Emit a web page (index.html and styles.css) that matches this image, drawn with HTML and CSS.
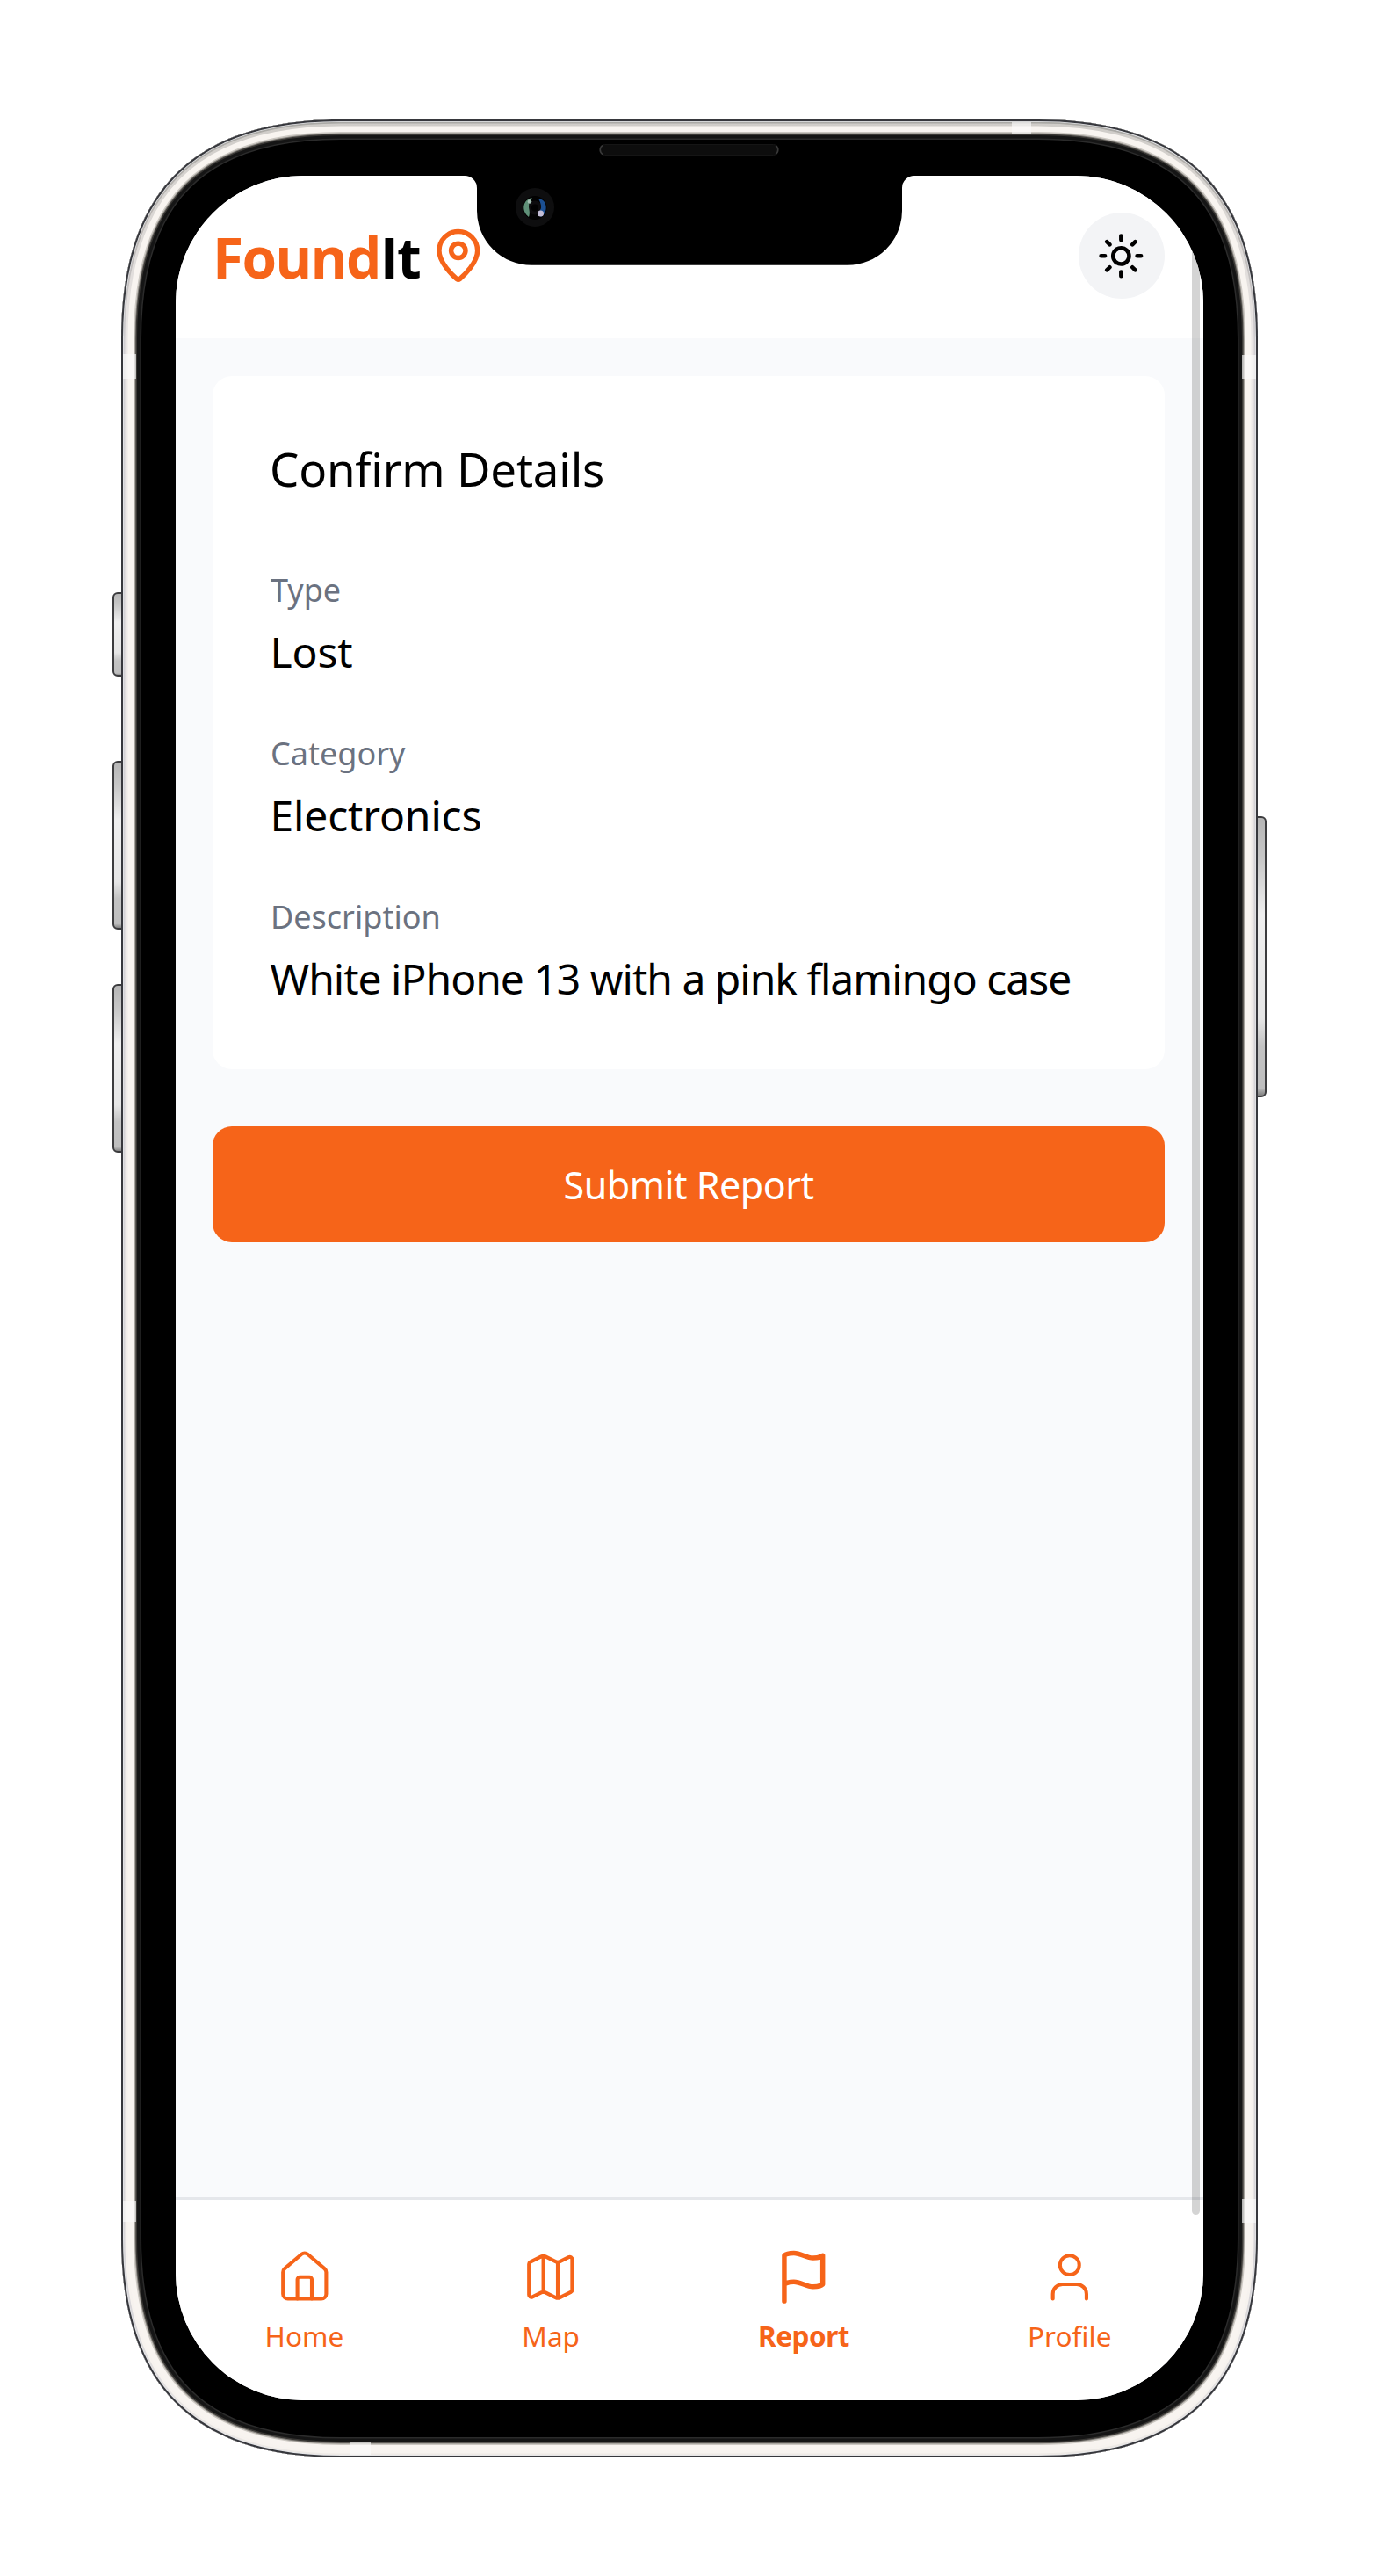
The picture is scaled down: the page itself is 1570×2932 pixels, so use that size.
FILE: index.html
```html
<!DOCTYPE html>
<html lang="en">
<head>
<meta charset="utf-8">
<title>FoundIt</title>
<link rel="stylesheet" href="styles.css">
</head>
<body>
<div class="phone">
  <svg class="frame" viewBox="0 0 1570 2932" aria-hidden="true">
    <defs>
      <path id="shell" d="M138 386C138 218 220 136 388 136H1182C1350 136 1432 218 1432 386V2547C1432 2715 1350 2797 1182 2797H388C220 2797 138 2715 138 2547Z"/>
      <clipPath id="inside"><use href="#shell"/></clipPath>
      <linearGradient id="button" x2="0" y2="1">
        <stop offset="0" stop-color="#b5b5b5"/><stop offset=".15" stop-color="#c8c8c8"/><stop offset=".35" stop-color="#efefef"/><stop offset=".72" stop-color="#e6e6e6"/><stop offset=".82" stop-color="#c3c3c3"/><stop offset=".97" stop-color="#bebebe"/><stop offset="1" stop-color="#777"/>
      </linearGradient>
      <linearGradient id="edge" gradientUnits="userSpaceOnUse" x1="0" y1="136" x2="0" y2="2797">
        <stop offset="0" stop-color="#aaa9a5"/><stop offset=".05" stop-color="#bcb8b5"/><stop offset=".1" stop-color="#d3d1d5"/><stop offset=".94" stop-color="#d9d7da"/><stop offset="1" stop-color="#eeeae6"/>
      </linearGradient>
      <linearGradient id="edge2" gradientUnits="userSpaceOnUse" x1="0" y1="136" x2="0" y2="2797">
        <stop offset="0" stop-color="#cfccc8"/><stop offset=".1" stop-color="#ebe7e6"/><stop offset="1" stop-color="#f7f3ef"/>
      </linearGradient>
    </defs>
    <g fill="url(#button)" stroke="#3c3c3e" stroke-width="2">
      <rect x="129" y="675" width="20" height="94" rx="5"/>
      <rect x="129" y="867" width="20" height="190" rx="5"/>
      <rect x="129" y="1121" width="20" height="190" rx="5"/>
      <rect x="1421" y="930" width="20" height="318" rx="5"/>
    </g>
    <g clip-path="url(#inside)" fill="none">
      <use href="#shell" fill="#000"/>
      <use href="#shell" stroke="#2b2b2b" stroke-width="46"/>
      <use href="#shell" stroke="#151515" stroke-width="43"/>
      <use href="#shell" stroke="#3a3835" stroke-width="36"/>
      <use href="#shell" stroke="#85827d" stroke-width="33"/>
      <use href="#shell" stroke="#cbc7c1" stroke-width="31"/>
      <use href="#shell" stroke="#f8f4f0" stroke-width="28"/>
      <use href="#shell" stroke="url(#edge2)" stroke-width="15"/>
      <use href="#shell" stroke="url(#edge)" stroke-width="9"/>
      <use href="#shell" stroke="#e4e5e8" stroke-width="5.5"/>
      <use href="#shell" stroke="#37383d" stroke-width="4"/>
    </g>
    <g fill="#fafafa" fill-opacity=".65">
      <rect x="140" y="403" width="15" height="28"/><rect x="1414" y="404" width="16" height="27"/>
      <rect x="1152" y="139" width="22" height="14"/><rect x="398" y="2779" width="24" height="15"/>
      <rect x="140" y="2505" width="15" height="24"/><rect x="1414" y="2503" width="16" height="27"/>
    </g>
  </svg>
  <main class="screen">
    <header class="topbar">
      <div class="logo"><span class="found">Found</span><span class="it">It</span>
        <svg class="pin" viewBox="0 0 24 24"><path d="M20 10c0 4.993-5.539 10.193-7.399 11.799a1 1 0 0 1-1.202 0C9.539 20.193 4 14.993 4 10a8 8 0 0 1 16 0"/><circle cx="12" cy="10" r="3"/></svg>
      </div>
      <button class="theme" aria-label="Theme"><svg viewBox="0 0 24 24"><circle cx="12" cy="12" r="4"/><path d="M12 2v2M12 20v2M4.93 4.93l1.41 1.41M17.66 17.66l1.41 1.41M2 12h2M20 12h2M6.34 17.66l-1.41 1.41M19.07 4.93l-1.41 1.41"/></svg></button>
    </header>
    <section class="content">
      <div class="card">
        <h1>Confirm Details</h1>
        <dl>
          <div><dt>Type</dt><dd>Lost</dd></div>
          <div><dt>Category</dt><dd>Electronics</dd></div>
          <div><dt>Description</dt><dd class="description">White iPhone 13 with a pink flamingo case</dd></div>
        </dl>
      </div>
      <button class="submit">Submit Report</button>
    </section>
    <nav class="tabs">
      <a><svg viewBox="0 0 24 24"><path d="M15 21v-8a1 1 0 0 0-1-1h-4a1 1 0 0 0-1 1v8"/><path d="M3 10a2 2 0 0 1 .709-1.528l7-5.999a2 2 0 0 1 2.582 0l7 5.999A2 2 0 0 1 21 10v9a2 2 0 0 1-2 2H5a2 2 0 0 1-2-2z"/></svg><span>Home</span></a>
      <a><svg viewBox="0 0 24 24"><path d="M14.106 5.553a2 2 0 0 0 1.788 0l3.659-1.83A1 1 0 0 1 21 4.619v12.764a1 1 0 0 1-.553.894l-4.553 2.277a2 2 0 0 1-1.788 0l-4.212-2.106a2 2 0 0 0-1.788 0l-3.659 1.83A1 1 0 0 1 3 19.381V6.618a1 1 0 0 1 .553-.894l4.553-2.277a2 2 0 0 1 1.788 0zM15 5.764v15M9 3.236v15"/></svg><span>Map</span></a>
      <a class="active"><svg viewBox="0 0 24 24"><path d="M4 15s1-1 4-1 5 2 8 2 4-1 4-1V3s-1 1-4 1-5-2-8-2-4 1-4 1zM4 22v-7"/></svg><span>Report</span></a>
      <a><svg viewBox="0 0 24 24"><path d="M19 21v-2a4 4 0 0 0-4-4H9a4 4 0 0 0-4 4v2"/><circle cx="12" cy="7" r="4"/></svg><span>Profile</span></a>
    </nav>
    <div class="scrollbar"></div>
  </main>
  <svg class="notch" viewBox="520 150 530 155" aria-hidden="true">
    <path d="M529 199V200A14 14 0 0 1 543 214V240A62 62 0 0 0 605 301.7H965A62 62 0 0 0 1027 240V214A14 14 0 0 1 1041 200V199Z"/>
    <rect x="682.5" y="164.5" width="204" height="12" rx="6" fill="#0d0d0d" stroke="#151515"/>
    <path d="M686 165.500a6 6 0 0 0 0 10M883 165.500a6 6 0 0 1 0 10" fill="none" stroke="#3a3a3a" stroke-width="1.500"/>
    <circle cx="609" cy="236" r="22" fill="#0e0e0f"/>
    <circle cx="609" cy="236.500" r="13.500" fill="#020202"/>
    <circle cx="609" cy="236.500" r="8" fill="#0d0c0e"/>
    <path d="M606 225C595 227 593 240 602 247C604 242 602 238 602 235Q602 229 606 225Z" fill="#5f9078"/>
    <path d="M613 226C623 227 625 241 616 247Q612 243 615 239T613 226Z" fill="#1b4f92"/>
    <circle cx="609" cy="236.500" r="4" fill="#020202"/>
    <circle cx="603" cy="229.500" r="2.300" fill="#a5c0b3"/><circle cx="615.500" cy="243" r="3.500" fill="#c4bfd8"/>
  </svg>
</div>
</body>
</html>
```
FILE: styles.css
```css
* { box-sizing: border-box; }
body { margin: 0; background: #fff; font-family: "Noto Sans", sans-serif; color: #000; }
h1, dl, dd { margin: 0; font-weight: 400; }
button { border: 0; padding: 0; font: inherit; }
svg { display: block; }
.phone { position: relative; width: 1570px; height: 2932px; padding: 200px; }
.frame { position: absolute; inset: 0; width: 1570px; height: 2932px; }
.notch { position: absolute; left: 520px; top: 150px; width: 530px; height: 155px; }
.screen { position: relative; display: flex; flex-direction: column; width: 1170px; height: 2532px; border-radius: 145px; overflow: hidden; background: #f9fafc; }
.topbar { display: flex; justify-content: space-between; align-items: center; height: 184.5px; padding: 0 44px 2px 42px; background: #fff; }
.logo { display: flex; align-items: center; font-family: "Open Sans", sans-serif; font-weight: 700; font-size: 64px; line-height: 88px; letter-spacing: -1.75px; }
.logo span { padding-top: 4px; }
.found { color: #f66419; }
.pin { width: 65.6px; height: 65.6px; margin-left: 11.3px; fill: none; stroke: #f66419; stroke-width: 2; stroke-linecap: round; stroke-linejoin: round; }
.theme { display: grid; place-items: center; width: 98.4px; height: 98.4px; border-radius: 50%; background: #f3f4f6; }
.theme svg { width: 54.7px; height: 54.7px; fill: none; stroke: #000; stroke-width: 2; stroke-linecap: round; }
.content { flex: 1; padding: 43.5px 44px 0 42px; min-height: 0; }
.card { height: 789px; padding: 67.5px 66px 0; border-radius: 22px; background: #fff; }
h1 { margin: 0 0 73px -1px; font-size: 52.8px; line-height: 76.6px; letter-spacing: -.2px; }
dl { display: flex; flex-direction: column; gap: 50.9px; }
dt { margin-bottom: 4px; color: #6b7280; font-size: 36px; line-height: 54.7px; }
dd { margin-left: -.5px; font-size: 48px; line-height: 76.6px; letter-spacing: -.15px; white-space: nowrap; }
.description { letter-spacing: -1px; }
.submit { display: block; width: 100%; height: 132px; margin-top: 65px; padding-top: 1px; border-radius: 22px; background: #f66419; color: #fff; font-size: 43px; letter-spacing: -.5px; }
.tabs { display: flex; justify-content: space-around; height: 231px; padding: 54.6px 3px 0 0; border-top: 3px solid #e5e7eb; background: #fff; color: #f66419; }
.tabs a { display: flex; flex-direction: column; align-items: center; gap: 12.5px; font-size: 31.5px; line-height: 44px; }
.tabs svg { width: 65.6px; height: 65.6px; fill: none; stroke: #f66419; stroke-width: 1.5; stroke-linecap: round; stroke-linejoin: round; }
.tabs .active { font-weight: 700; letter-spacing: -.5px; }
.tabs .active svg { stroke-width: 2; }
.scrollbar { position: absolute; top: 8px; left: 1157px; width: 9px; height: 2313px; border-radius: 5px; background: rgba(0, 0, 0, .17); }
```
